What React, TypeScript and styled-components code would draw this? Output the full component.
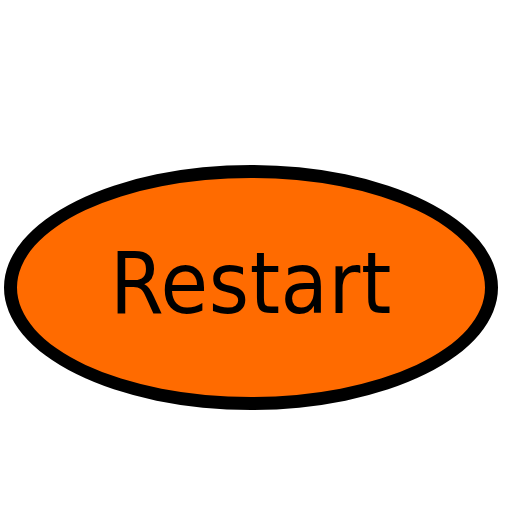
import React from "react";
import styled, { createGlobalStyle } from "styled-components";

const Global = createGlobalStyle`
  html, body { margin: 0; padding: 0; background: #ffffff; }
  body { width: 512px; height: 512px; overflow: hidden; }
`;

const Page = styled.div`
  width: 512px;
  height: 512px;
  box-sizing: border-box;
  padding: 165px 0 0 4px;
`;

const OvalButton = styled.button`
  box-sizing: border-box;
  width: 494px;
  height: 245px;
  border: 13px solid #000000;
  border-radius: 50%;
  background: #ff6b00;
  padding: 0 0 10px 0;
  margin: 0;
  display: flex;
  align-items: center;
  justify-content: center;
  font-family: "DejaVu Sans", "Liberation Sans", sans-serif;
  font-stretch: condensed;
  font-size: 86px;
  letter-spacing: 0.6px;
  line-height: 1;
  color: #000000;
  cursor: pointer;
`;

export default function App() {
  return (
    <>
      <Global />
      <Page>
        <OvalButton>Restart</OvalButton>
      </Page>
    </>
  );
}
